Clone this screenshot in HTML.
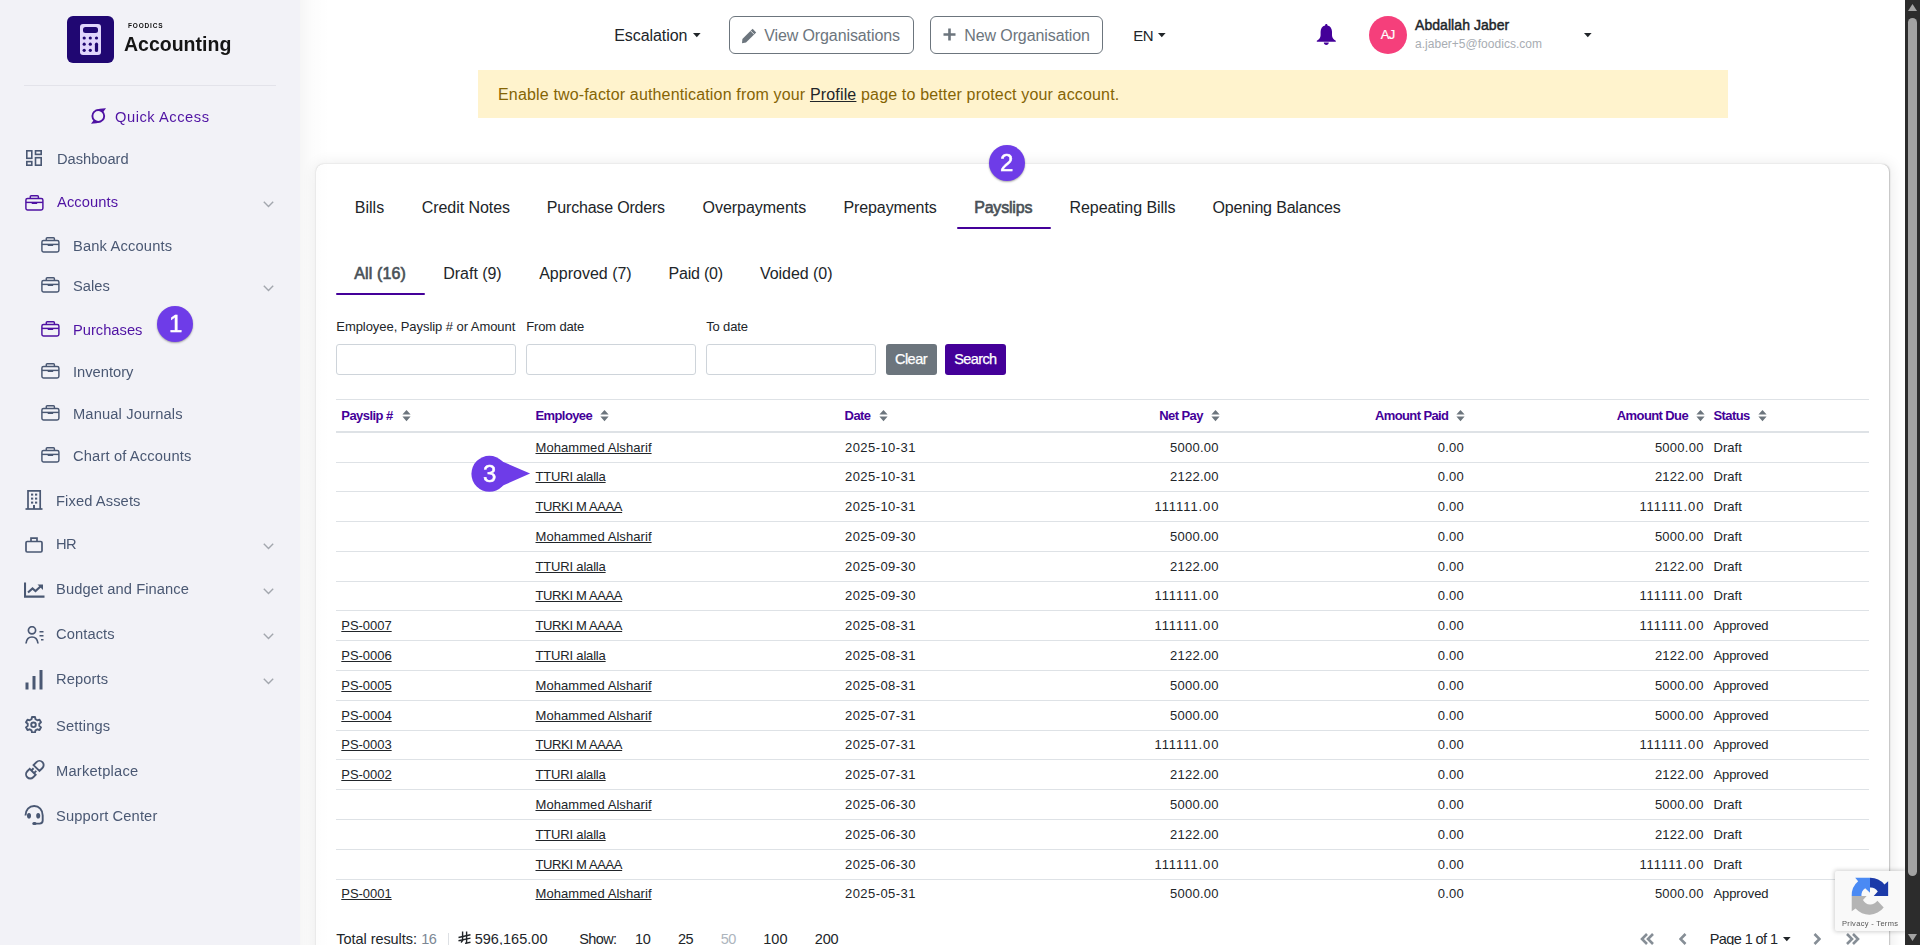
<!DOCTYPE html>
<html><head><meta charset="utf-8">
<style>
*{box-sizing:border-box;margin:0;padding:0}
html,body{width:1920px;height:945px;overflow:hidden;background:#fff;font-family:"Liberation Sans",sans-serif;color:#212529}
.t{position:absolute;white-space:nowrap;line-height:1}
.r{position:absolute}
.u{text-decoration:underline;text-underline-offset:1px}
.g{will-change:transform}
</style></head>
<body>

<div class="r" style="left:316px;top:164px;width:1573px;height:900px;border-radius:8px;background:#fff;box-shadow:0.3px 0.3px 1.5px rgba(0,0,0,0.22),1px 1px 14px 3px rgba(0,0,0,0.065)"></div>
<div class="r" style="left:0px;top:0px;width:300px;height:945px;background:#f2f2f7"></div>
<div class="r" style="left:67px;top:16px;width:47px;height:47px;border-radius:6px;background:#200772"></div>
<svg class="r" style="left:67px;top:16px" width="47" height="47" viewBox="0 0 47 47"><rect x="13" y="8" width="21" height="31" rx="3" fill="#e0d5fb"/>
<rect x="16" y="11" width="15" height="6" rx="2.5" fill="#200772"/>
<g fill="#200772"><circle cx="17.2" cy="22" r="1.6"/><circle cx="23.3" cy="22" r="1.6"/><circle cx="29.5" cy="22" r="1.6"/>
<circle cx="17.2" cy="28.2" r="1.6"/><circle cx="23.3" cy="28.2" r="1.6"/>
<circle cx="17.2" cy="34.3" r="1.6"/><circle cx="23.3" cy="34.3" r="1.6"/>
<rect x="27.9" y="26.6" width="3.2" height="9.4" rx="1.6"/></g></svg>
<div class="t  g" style="left:128px;top:23px;font-size:6.5px;color:#111;font-weight:bold;letter-spacing:0.815px;">FOODICS</div>
<div class="t  g" style="left:124px;top:35px;font-size:19.5px;color:#151515;font-weight:bold;letter-spacing:0.006px;">Accounting</div>
<div class="r" style="left:24px;top:85px;width:252px;height:1px;background:#e3e3ea"></div>
<div class="t  g" style="left:114.8px;top:110px;font-size:14.7px;color:#4f12a3;letter-spacing:0.534px;">Quick Access</div>
<svg class="r" style="left:85px;top:100px" width="30" height="30" viewBox="0 0 30 30"><circle cx="13.3" cy="16" r="5.9" fill="none" stroke="#4f12a3" stroke-width="1.9"/><path d="M10 9.9 Q15 8.2 21 8.3 L18.2 11.9 Z M16.6 22.1 Q11.5 23.8 6 23.8 L8.6 20.2 Z" fill="#4f12a3"/></svg>
<div class="t  g" style="left:56.6px;top:152px;font-size:14.7px;color:#4a5873;letter-spacing:-0.027px;">Dashboard</div>
<svg class="r" style="left:26px;top:150px" width="16" height="16" viewBox="0 0 16 16"><g fill="none" stroke="#4a5873" stroke-width="1.6"><rect x="0.8" y="0.8" width="5" height="7.5"/><rect x="9.5" y="0.8" width="5.7" height="3.6"/><rect x="0.8" y="11.6" width="5" height="3.6"/><rect x="9.5" y="7.7" width="5.7" height="7.5"/></g></svg>
<div class="t  g" style="left:56.6px;top:195px;font-size:14.7px;color:#4f12a3;letter-spacing:0.105px;">Accounts</div>
<svg class="r" style="left:24.7px;top:194.8px" width="19" height="17" viewBox="0 0 19 17"><g fill="none" stroke="#4f12a3" stroke-width="1.45"><rect x="0.9" y="3.4" width="17" height="11.6" rx="1.7"/><path d="M5.3 3.4 V1.7 Q5.3 0.75 6.2 0.75 H12.5 Q13.4 0.75 13.4 1.7 V3.4"/><path d="M0.9 7.4 H17.9"/></g><rect x="6.7" y="7.4" width="5.5" height="1.6" rx="0.5" fill="#4f12a3"/></svg>
<svg class="r" style="left:263px;top:201px" width="11" height="7" viewBox="0 0 11 7"><path d="M0.8 0.8 L5.5 5.5 L10.2 0.8" fill="none" stroke="#a3a7ae" stroke-width="1.4"/></svg>
<div class="t  g" style="left:72.5px;top:239px;font-size:14.7px;color:#4a5873;letter-spacing:0.163px;">Bank Accounts</div>
<svg class="r" style="left:40.6px;top:237px" width="19" height="17" viewBox="0 0 19 17"><g fill="none" stroke="#4a5873" stroke-width="1.45"><rect x="0.9" y="3.4" width="17" height="11.6" rx="1.7"/><path d="M5.3 3.4 V1.7 Q5.3 0.75 6.2 0.75 H12.5 Q13.4 0.75 13.4 1.7 V3.4"/><path d="M0.9 7.4 H17.9"/></g><rect x="6.7" y="7.4" width="5.5" height="1.6" rx="0.5" fill="#4a5873"/></svg>
<div class="t  g" style="left:72.5px;top:279px;font-size:14.7px;color:#4a5873;">Sales</div>
<svg class="r" style="left:40.6px;top:277.3px" width="19" height="17" viewBox="0 0 19 17"><g fill="none" stroke="#4a5873" stroke-width="1.45"><rect x="0.9" y="3.4" width="17" height="11.6" rx="1.7"/><path d="M5.3 3.4 V1.7 Q5.3 0.75 6.2 0.75 H12.5 Q13.4 0.75 13.4 1.7 V3.4"/><path d="M0.9 7.4 H17.9"/></g><rect x="6.7" y="7.4" width="5.5" height="1.6" rx="0.5" fill="#4a5873"/></svg>
<div class="t  g" style="left:72.5px;top:323px;font-size:14.7px;color:#4f12a3;">Purchases</div>
<svg class="r" style="left:40.6px;top:321px" width="19" height="17" viewBox="0 0 19 17"><g fill="none" stroke="#4f12a3" stroke-width="1.45"><rect x="0.9" y="3.4" width="17" height="11.6" rx="1.7"/><path d="M5.3 3.4 V1.7 Q5.3 0.75 6.2 0.75 H12.5 Q13.4 0.75 13.4 1.7 V3.4"/><path d="M0.9 7.4 H17.9"/></g><rect x="6.7" y="7.4" width="5.5" height="1.6" rx="0.5" fill="#4f12a3"/></svg>
<div class="t  g" style="left:72.5px;top:365px;font-size:14.7px;color:#4a5873;">Inventory</div>
<svg class="r" style="left:40.6px;top:363px" width="19" height="17" viewBox="0 0 19 17"><g fill="none" stroke="#4a5873" stroke-width="1.45"><rect x="0.9" y="3.4" width="17" height="11.6" rx="1.7"/><path d="M5.3 3.4 V1.7 Q5.3 0.75 6.2 0.75 H12.5 Q13.4 0.75 13.4 1.7 V3.4"/><path d="M0.9 7.4 H17.9"/></g><rect x="6.7" y="7.4" width="5.5" height="1.6" rx="0.5" fill="#4a5873"/></svg>
<div class="t  g" style="left:72.5px;top:407px;font-size:14.7px;color:#4a5873;letter-spacing:0.131px;">Manual Journals</div>
<svg class="r" style="left:40.6px;top:405px" width="19" height="17" viewBox="0 0 19 17"><g fill="none" stroke="#4a5873" stroke-width="1.45"><rect x="0.9" y="3.4" width="17" height="11.6" rx="1.7"/><path d="M5.3 3.4 V1.7 Q5.3 0.75 6.2 0.75 H12.5 Q13.4 0.75 13.4 1.7 V3.4"/><path d="M0.9 7.4 H17.9"/></g><rect x="6.7" y="7.4" width="5.5" height="1.6" rx="0.5" fill="#4a5873"/></svg>
<div class="t  g" style="left:72.5px;top:449px;font-size:14.7px;color:#4a5873;letter-spacing:0.148px;">Chart of Accounts</div>
<svg class="r" style="left:40.6px;top:447px" width="19" height="17" viewBox="0 0 19 17"><g fill="none" stroke="#4a5873" stroke-width="1.45"><rect x="0.9" y="3.4" width="17" height="11.6" rx="1.7"/><path d="M5.3 3.4 V1.7 Q5.3 0.75 6.2 0.75 H12.5 Q13.4 0.75 13.4 1.7 V3.4"/><path d="M0.9 7.4 H17.9"/></g><rect x="6.7" y="7.4" width="5.5" height="1.6" rx="0.5" fill="#4a5873"/></svg>
<svg class="r" style="left:263px;top:285px" width="11" height="7" viewBox="0 0 11 7"><path d="M0.8 0.8 L5.5 5.5 L10.2 0.8" fill="none" stroke="#a3a7ae" stroke-width="1.4"/></svg>
<div class="t  g" style="left:56.2px;top:494px;font-size:14.7px;color:#4a5873;letter-spacing:0.106px;">Fixed Assets</div>
<div class="t  g" style="left:56.2px;top:537px;font-size:14.7px;color:#4a5873;letter-spacing:-0.600px;">HR</div>
<div class="t  g" style="left:56.2px;top:582px;font-size:14.7px;color:#4a5873;letter-spacing:0.083px;">Budget and Finance</div>
<div class="t  g" style="left:56.2px;top:627px;font-size:14.7px;color:#4a5873;letter-spacing:0.098px;">Contacts</div>
<div class="t  g" style="left:56.2px;top:672px;font-size:14.7px;color:#4a5873;letter-spacing:0.121px;">Reports</div>
<div class="t  g" style="left:56.2px;top:719px;font-size:14.7px;color:#4a5873;letter-spacing:0.155px;">Settings</div>
<div class="t  g" style="left:56.2px;top:764px;font-size:14.7px;color:#4a5873;letter-spacing:0.213px;">Marketplace</div>
<div class="t  g" style="left:56.2px;top:809px;font-size:14.7px;color:#4a5873;letter-spacing:0.131px;">Support Center</div>
<svg class="r" style="left:263px;top:543px" width="11" height="7" viewBox="0 0 11 7"><path d="M0.8 0.8 L5.5 5.5 L10.2 0.8" fill="none" stroke="#a3a7ae" stroke-width="1.4"/></svg>
<svg class="r" style="left:263px;top:588px" width="11" height="7" viewBox="0 0 11 7"><path d="M0.8 0.8 L5.5 5.5 L10.2 0.8" fill="none" stroke="#a3a7ae" stroke-width="1.4"/></svg>
<svg class="r" style="left:263px;top:632.6px" width="11" height="7" viewBox="0 0 11 7"><path d="M0.8 0.8 L5.5 5.5 L10.2 0.8" fill="none" stroke="#a3a7ae" stroke-width="1.4"/></svg>
<svg class="r" style="left:263px;top:677.5px" width="11" height="7" viewBox="0 0 11 7"><path d="M0.8 0.8 L5.5 5.5 L10.2 0.8" fill="none" stroke="#a3a7ae" stroke-width="1.4"/></svg>
<svg class="r" style="left:25px;top:490px" width="18" height="20" viewBox="0 0 18 20"><g fill="none" stroke="#4a5873" stroke-width="1.7"><path d="M3 19 V0.9 H15.2 V19"/><path d="M0.5 19 H17.5"/></g><g fill="#4a5873"><rect x="6" y="3.6" width="2.2" height="2"/><rect x="10" y="3.6" width="2.2" height="2"/><rect x="6" y="7.6" width="2.2" height="2"/><rect x="10" y="7.6" width="2.2" height="2"/><rect x="6" y="11.6" width="2.2" height="2"/><rect x="10" y="11.6" width="2.2" height="2"/><rect x="8" y="15" width="2" height="4"/></g></svg>
<svg class="r" style="left:25px;top:537px" width="18" height="16" viewBox="0 0 18 16"><g fill="none" stroke="#4a5873" stroke-width="1.7"><rect x="1" y="4.5" width="16" height="10.5" rx="1.2"/><path d="M6 4.5 V1.2 H12 V4.5"/></g></svg>
<svg class="r" style="left:24px;top:582px" width="21" height="16" viewBox="0 0 21 16"><g fill="none" stroke="#4a5873" stroke-width="2.1"><path d="M1 0.5 V14.6 H20.5"/><path d="M4 10.5 L8.5 6.5 L11.5 9 L17 4"/></g><path d="M13.5 2.5 H19 V8 Z" fill="#4a5873"/></svg>
<svg class="r" style="left:25px;top:626px" width="19" height="18" viewBox="0 0 19 18"><g fill="none" stroke="#4a5873" stroke-width="1.7"><circle cx="7" cy="4.3" r="3.6"/><path d="M1 17.5 C1.5 13 4 11 7 11 C10 11 12.5 13 13 17.5"/></g><g fill="#4a5873"><rect x="14.5" y="5" width="4" height="1.5"/><rect x="14.5" y="9" width="4" height="1.5"/><rect x="16" y="13" width="2.5" height="1.5"/></g></svg>
<svg class="r" style="left:25px;top:670px" width="19" height="20" viewBox="0 0 19 20"><g fill="#4a5873"><rect x="0.5" y="12.5" width="3" height="7"/><rect x="7.5" y="6" width="3" height="13.5"/><rect x="14.5" y="0" width="3" height="19.5"/></g></svg>
<svg class="r" style="left:25px;top:716px" width="17" height="17" viewBox="0 0 17 17"><g fill="none" stroke="#4a5873" stroke-width="1.9"><path d="M7 1 H10 L10.5 3.2 L12.4 4.3 L14.5 3.6 L16 6.2 L14.3 7.7 V9.9 L16 11.4 L14.5 14 L12.4 13.3 L10.5 14.4 L10 16.5 H7 L6.5 14.4 L4.6 13.3 L2.5 14 L1 11.4 L2.7 9.9 V7.7 L1 6.2 L2.5 3.6 L4.6 4.3 L6.5 3.2 Z" stroke-linejoin="round"/><circle cx="8.5" cy="8.8" r="2.3"/></g></svg>
<svg class="r" style="left:21px;top:757px" width="27" height="26" viewBox="0 0 27 26"><g transform="rotate(45 13.5 13)" fill="none" stroke="#4a5873" stroke-width="1.9"><path d="M9.3 10.2 V6 A4.2 4.2 0 0 1 17.7 6 V10.2 Z"/><path d="M9.3 15.6 V19 A4.2 4.2 0 0 0 17.7 19 V15.6 Z"/><path d="M11.6 15.6 V12.4 M15.4 15.6 V12.4"/></g></svg>
<svg class="r" style="left:24px;top:805px" width="20" height="20" viewBox="0 0 20 20"><g fill="none" stroke="#4a5873" stroke-width="1.9"><path d="M1.5 10.5 C1.5 4.8 5.2 1 10.2 1 C15 1 18.7 4.8 18.7 10.5 V15.5 Q18.7 18.6 15.5 18.6 H11"/></g><g fill="#4a5873"><ellipse cx="5" cy="10.8" rx="2" ry="2.8"/><ellipse cx="14.2" cy="10.8" rx="2" ry="2.8"/><rect x="8.3" y="17" width="4.2" height="3" rx="1.5"/></g></svg>
<div class="r" style="left:300px;top:0px;width:30px;height:945px;background:linear-gradient(to right,rgba(0,0,0,0.035),rgba(0,0,0,0.012) 40%,rgba(0,0,0,0))"></div>
<div class="r" style="left:157.3px;top:305.7px;width:36px;height:36px;border-radius:50%;background:#6e3ce8;box-shadow:0 1px 2px rgba(0,0,0,0.35)"></div>
<div class="t  g" style="left:168.8px;top:312px;font-size:24px;color:#fff;-webkit-text-stroke:0.5px #fff;">1</div>
<div class="t " style="left:614.2px;top:28px;font-size:16px;color:#212529;letter-spacing:-0.058px;">Escalation</div>
<svg class="r" style="left:692.5px;top:33px" width="8" height="5" viewBox="0 0 8 5"><path d="M0 0 H7.6 L3.8 4.2 Z" fill="#212529"/></svg>
<div class="r" style="left:729px;top:16px;width:185px;height:38px;border:1px solid #6c757d;border-radius:6px"></div>
<svg class="r" style="left:740.5px;top:27.8px" width="16" height="16" viewBox="0 0 16 16"><path d="M11.6 0.8 L15.2 4.4 L5 14.6 L1 15.2 L1.4 11 Z" fill="#6c757d"/><path d="M9.6 2.8 L13.2 6.4" stroke="#fff" stroke-width="0.8"/></svg>
<div class="t " style="left:764.2px;top:28px;font-size:16px;color:#6c757d;letter-spacing:-0.103px;">View Organisations</div>
<div class="r" style="left:930px;top:16px;width:173px;height:38px;border:1px solid #6c757d;border-radius:6px"></div>
<svg class="r" style="left:942.8px;top:28.3px" width="13" height="13" viewBox="0 0 13 13"><path d="M6.5 0.5 V12.5 M0.5 6.5 H12.5" stroke="#6c757d" stroke-width="2.6"/></svg>
<div class="t " style="left:964.2px;top:28px;font-size:16px;color:#6c757d;letter-spacing:-0.092px;">New Organisation</div>
<div class="t " style="left:1133.3px;top:28px;font-size:15px;color:#212529;letter-spacing:-0.600px;">EN</div>
<svg class="r" style="left:1157.5px;top:33px" width="8" height="5" viewBox="0 0 8 5"><path d="M0 0 H7.6 L3.8 4.2 Z" fill="#212529"/></svg>
<svg class="r" style="left:1316px;top:23px" width="21" height="23" viewBox="0 0 21 23"><path d="M10.3 1 C11.1 1 11.5 1.6 11.5 2.4 C14.6 3.1 16 5.6 16 8.8 V12.2 C16 14.6 17.6 16.6 19.8 17.8 V18.8 H0.8 V17.8 C3 16.6 4.6 14.6 4.6 12.2 V8.8 C4.6 5.6 6 3.1 9.1 2.4 C9.1 1.6 9.5 1 10.3 1 Z M7.8 19.6 H12.8 C12.8 21 11.7 21.9 10.3 21.9 C8.9 21.9 7.8 21 7.8 19.6 Z" fill="#440099"/></svg>
<div class="r" style="left:1369px;top:15.7px;width:38px;height:38px;border-radius:50%;background:#f53f7b"></div>
<div class="t " style="left:1380.8px;top:28px;font-size:13px;color:#fff;letter-spacing:-0.600px;-webkit-text-stroke:0.2px #fff;">AJ</div>
<div class="t " style="left:1415px;top:18px;font-size:14px;color:#212529;letter-spacing:0.061px;-webkit-text-stroke:0.45px #212529;">Abdallah Jaber</div>
<div class="t " style="left:1415px;top:38px;font-size:12px;color:#a8adb3;letter-spacing:0.021px;">a.jaber+5@foodics.com</div>
<svg class="r" style="left:1584px;top:33px" width="8" height="5" viewBox="0 0 8 5"><path d="M0 0 H7.6 L3.8 4.2 Z" fill="#212529"/></svg>
<div class="r" style="left:478px;top:70px;width:1250px;height:48px;background:#fff3cd"></div>
<div class="t" style="left:498px;top:87px;font-size:16px;color:#856404;letter-spacing:0.16px">Enable two-factor authentication from your <span class="u" style="color:#212529">Profile</span> page to better protect your account.</div>
<div class="t " style="left:354.7px;top:200px;font-size:16px;color:#212529;letter-spacing:0.041px;">Bills</div>
<div class="t " style="left:421.7px;top:200px;font-size:16px;color:#212529;letter-spacing:-0.057px;">Credit Notes</div>
<div class="t " style="left:546.8px;top:200px;font-size:16px;color:#212529;letter-spacing:-0.189px;">Purchase Orders</div>
<div class="t " style="left:702.5px;top:200px;font-size:16px;color:#212529;letter-spacing:-0.022px;">Overpayments</div>
<div class="t " style="left:843.4px;top:200px;font-size:16px;color:#212529;letter-spacing:-0.087px;">Prepayments</div>
<div class="t " style="left:974.2px;top:200px;font-size:16px;color:#495057;letter-spacing:-0.197px;-webkit-text-stroke:0.55px #495057;text-shadow:0 0 1px rgba(0,0,0,0.2);">Payslips</div>
<div class="t " style="left:1069.4px;top:200px;font-size:16px;color:#212529;letter-spacing:-0.038px;">Repeating Bills</div>
<div class="t " style="left:1212.5px;top:200px;font-size:16px;color:#212529;letter-spacing:-0.164px;">Opening Balances</div>
<div class="r" style="left:956.6px;top:227px;width:94px;height:2px;background:#440099;border-radius:2px"></div>
<div class="t " style="left:354.2px;top:266px;font-size:16px;color:#495057;letter-spacing:0.131px;-webkit-text-stroke:0.55px #495057;text-shadow:0 0 1px rgba(0,0,0,0.2);">All (16)</div>
<div class="t " style="left:443.3px;top:266px;font-size:16px;color:#212529;letter-spacing:-0.034px;">Draft (9)</div>
<div class="t " style="left:539.2px;top:266px;font-size:16px;color:#212529;letter-spacing:0.001px;">Approved (7)</div>
<div class="t " style="left:668.5px;top:266px;font-size:16px;color:#212529;letter-spacing:-0.218px;">Paid (0)</div>
<div class="t " style="left:760px;top:266px;font-size:16px;color:#212529;letter-spacing:-0.049px;">Voided (0)</div>
<div class="r" style="left:336.3px;top:293px;width:88.4px;height:2px;background:#440099;border-radius:2px"></div>
<div class="t " style="left:336.3px;top:320px;font-size:13px;color:#212529;letter-spacing:-0.059px;">Employee, Payslip # or Amount</div>
<div class="t " style="left:526.3px;top:320px;font-size:13px;color:#212529;letter-spacing:-0.168px;">From date</div>
<div class="t " style="left:706.2px;top:320px;font-size:13px;color:#212529;letter-spacing:-0.141px;">To date</div>
<div class="r" style="left:336px;top:344px;width:180px;height:31px;border:1px solid #ced4da;border-radius:3px;background:#fff"></div>
<div class="r" style="left:526px;top:344px;width:170px;height:31px;border:1px solid #ced4da;border-radius:3px;background:#fff"></div>
<div class="r" style="left:706px;top:344px;width:170px;height:31px;border:1px solid #ced4da;border-radius:3px;background:#fff"></div>
<div class="r" style="left:886px;top:344px;width:51px;height:31px;background:#6c757d;border-radius:3px"></div>
<div class="t " style="left:895px;top:352px;font-size:14.5px;color:#fff;letter-spacing:-0.538px;-webkit-text-stroke:0.25px #fff;">Clear</div>
<div class="r" style="left:945px;top:344px;width:61px;height:31px;background:#440099;border-radius:3px"></div>
<div class="t " style="left:954.2px;top:352px;font-size:14.5px;color:#fff;letter-spacing:-0.600px;-webkit-text-stroke:0.25px #fff;">Search</div>
<div class="r" style="left:336px;top:399px;width:1533px;height:1px;background:#dee2e6"></div>
<div class="r" style="left:336px;top:431px;width:1533px;height:2px;background:#dee2e6"></div>
<div class="t " style="left:341.3px;top:409px;font-size:13px;color:#440099;font-weight:bold;letter-spacing:-0.546px;">Payslip #</div>
<svg class="r" style="left:401.5px;top:409.7px" width="9" height="12" viewBox="0 0 9 12"><path d="M4.5 0 L8.6 4.6 H0.4 Z M4.5 11.2 L8.6 6.6 H0.4 Z" fill="#6c757d"/></svg>
<div class="t " style="left:535.5px;top:409px;font-size:13px;color:#440099;font-weight:bold;letter-spacing:-0.600px;">Employee</div>
<svg class="r" style="left:600px;top:409.7px" width="9" height="12" viewBox="0 0 9 12"><path d="M4.5 0 L8.6 4.6 H0.4 Z M4.5 11.2 L8.6 6.6 H0.4 Z" fill="#6c757d"/></svg>
<div class="t " style="left:844.6px;top:409px;font-size:13px;color:#440099;font-weight:bold;letter-spacing:-0.600px;">Date</div>
<svg class="r" style="left:879.2px;top:409.7px" width="9" height="12" viewBox="0 0 9 12"><path d="M4.5 0 L8.6 4.6 H0.4 Z M4.5 11.2 L8.6 6.6 H0.4 Z" fill="#6c757d"/></svg>
<div class="t " style="left:1159.3px;top:409px;font-size:13px;color:#440099;font-weight:bold;letter-spacing:-0.600px;">Net Pay</div>
<svg class="r" style="left:1210.7px;top:409.7px" width="9" height="12" viewBox="0 0 9 12"><path d="M4.5 0 L8.6 4.6 H0.4 Z M4.5 11.2 L8.6 6.6 H0.4 Z" fill="#6c757d"/></svg>
<div class="t " style="left:1374.9px;top:409px;font-size:13px;color:#440099;font-weight:bold;letter-spacing:-0.600px;">Amount Paid</div>
<svg class="r" style="left:1456px;top:409.7px" width="9" height="12" viewBox="0 0 9 12"><path d="M4.5 0 L8.6 4.6 H0.4 Z M4.5 11.2 L8.6 6.6 H0.4 Z" fill="#6c757d"/></svg>
<div class="t " style="left:1616.8px;top:409px;font-size:13px;color:#440099;font-weight:bold;letter-spacing:-0.600px;">Amount Due</div>
<svg class="r" style="left:1695.5px;top:409.7px" width="9" height="12" viewBox="0 0 9 12"><path d="M4.5 0 L8.6 4.6 H0.4 Z M4.5 11.2 L8.6 6.6 H0.4 Z" fill="#6c757d"/></svg>
<div class="t " style="left:1713.5px;top:409px;font-size:13px;color:#440099;font-weight:bold;letter-spacing:-0.600px;">Status</div>
<svg class="r" style="left:1758px;top:409.7px" width="9" height="12" viewBox="0 0 9 12"><path d="M4.5 0 L8.6 4.6 H0.4 Z M4.5 11.2 L8.6 6.6 H0.4 Z" fill="#6c757d"/></svg>
<div class="r" style="left:336px;top:462px;width:1533px;height:1px;background:#dee2e6"></div>
<div class="t u" style="left:535.5px;top:441px;font-size:13px;color:#212529;letter-spacing:0.070px;">Mohammed Alsharif</div>
<div class="t " style="left:845px;top:441px;font-size:13px;color:#212529;letter-spacing:0.433px;">2025-10-31</div>
<div class="t " style="left:1170.0px;top:441px;font-size:13px;color:#212529;letter-spacing:0.251px;">5000.00</div>
<div class="t " style="left:1437.7px;top:441px;font-size:13px;color:#212529;letter-spacing:0.232px;">0.00</div>
<div class="t " style="left:1654.9px;top:441px;font-size:13px;color:#212529;letter-spacing:0.251px;">5000.00</div>
<div class="t " style="left:1713.5px;top:441px;font-size:13px;color:#212529;letter-spacing:0.057px;">Draft</div>
<div class="r" style="left:336px;top:491px;width:1533px;height:1px;background:#dee2e6"></div>
<div class="t u" style="left:535.5px;top:470px;font-size:13px;color:#212529;letter-spacing:-0.176px;">TTURI alalla</div>
<div class="t " style="left:845px;top:470px;font-size:13px;color:#212529;letter-spacing:0.433px;">2025-10-31</div>
<div class="t " style="left:1170.0px;top:470px;font-size:13px;color:#212529;letter-spacing:0.251px;">2122.00</div>
<div class="t " style="left:1437.7px;top:470px;font-size:13px;color:#212529;letter-spacing:0.232px;">0.00</div>
<div class="t " style="left:1654.9px;top:470px;font-size:13px;color:#212529;letter-spacing:0.251px;">2122.00</div>
<div class="t " style="left:1713.5px;top:470px;font-size:13px;color:#212529;letter-spacing:0.057px;">Draft</div>
<div class="r" style="left:336px;top:521px;width:1533px;height:1px;background:#dee2e6"></div>
<div class="t u" style="left:535.5px;top:500px;font-size:13px;color:#212529;letter-spacing:-0.366px;">TURKI M AAAA</div>
<div class="t " style="left:845px;top:500px;font-size:13px;color:#212529;letter-spacing:0.433px;">2025-10-31</div>
<div class="t " style="left:1154.5px;top:500px;font-size:13px;color:#212529;letter-spacing:0.921px;">111111.00</div>
<div class="t " style="left:1437.7px;top:500px;font-size:13px;color:#212529;letter-spacing:0.232px;">0.00</div>
<div class="t " style="left:1639.4px;top:500px;font-size:13px;color:#212529;letter-spacing:0.921px;">111111.00</div>
<div class="t " style="left:1713.5px;top:500px;font-size:13px;color:#212529;letter-spacing:0.057px;">Draft</div>
<div class="r" style="left:336px;top:551px;width:1533px;height:1px;background:#dee2e6"></div>
<div class="t u" style="left:535.5px;top:530px;font-size:13px;color:#212529;letter-spacing:0.070px;">Mohammed Alsharif</div>
<div class="t " style="left:845px;top:530px;font-size:13px;color:#212529;letter-spacing:0.433px;">2025-09-30</div>
<div class="t " style="left:1170.0px;top:530px;font-size:13px;color:#212529;letter-spacing:0.251px;">5000.00</div>
<div class="t " style="left:1437.7px;top:530px;font-size:13px;color:#212529;letter-spacing:0.232px;">0.00</div>
<div class="t " style="left:1654.9px;top:530px;font-size:13px;color:#212529;letter-spacing:0.251px;">5000.00</div>
<div class="t " style="left:1713.5px;top:530px;font-size:13px;color:#212529;letter-spacing:0.057px;">Draft</div>
<div class="r" style="left:336px;top:581px;width:1533px;height:1px;background:#dee2e6"></div>
<div class="t u" style="left:535.5px;top:560px;font-size:13px;color:#212529;letter-spacing:-0.176px;">TTURI alalla</div>
<div class="t " style="left:845px;top:560px;font-size:13px;color:#212529;letter-spacing:0.433px;">2025-09-30</div>
<div class="t " style="left:1170.0px;top:560px;font-size:13px;color:#212529;letter-spacing:0.251px;">2122.00</div>
<div class="t " style="left:1437.7px;top:560px;font-size:13px;color:#212529;letter-spacing:0.232px;">0.00</div>
<div class="t " style="left:1654.9px;top:560px;font-size:13px;color:#212529;letter-spacing:0.251px;">2122.00</div>
<div class="t " style="left:1713.5px;top:560px;font-size:13px;color:#212529;letter-spacing:0.057px;">Draft</div>
<div class="r" style="left:336px;top:610px;width:1533px;height:1px;background:#dee2e6"></div>
<div class="t u" style="left:535.5px;top:589px;font-size:13px;color:#212529;letter-spacing:-0.366px;">TURKI M AAAA</div>
<div class="t " style="left:845px;top:589px;font-size:13px;color:#212529;letter-spacing:0.433px;">2025-09-30</div>
<div class="t " style="left:1154.5px;top:589px;font-size:13px;color:#212529;letter-spacing:0.921px;">111111.00</div>
<div class="t " style="left:1437.7px;top:589px;font-size:13px;color:#212529;letter-spacing:0.232px;">0.00</div>
<div class="t " style="left:1639.4px;top:589px;font-size:13px;color:#212529;letter-spacing:0.921px;">111111.00</div>
<div class="t " style="left:1713.5px;top:589px;font-size:13px;color:#212529;letter-spacing:0.057px;">Draft</div>
<div class="r" style="left:336px;top:640px;width:1533px;height:1px;background:#dee2e6"></div>
<div class="t u" style="left:341.3px;top:619px;font-size:13px;color:#212529;letter-spacing:-0.032px;">PS-0007</div>
<div class="t u" style="left:535.5px;top:619px;font-size:13px;color:#212529;letter-spacing:-0.366px;">TURKI M AAAA</div>
<div class="t " style="left:845px;top:619px;font-size:13px;color:#212529;letter-spacing:0.433px;">2025-08-31</div>
<div class="t " style="left:1154.5px;top:619px;font-size:13px;color:#212529;letter-spacing:0.921px;">111111.00</div>
<div class="t " style="left:1437.7px;top:619px;font-size:13px;color:#212529;letter-spacing:0.232px;">0.00</div>
<div class="t " style="left:1639.4px;top:619px;font-size:13px;color:#212529;letter-spacing:0.921px;">111111.00</div>
<div class="t " style="left:1713.5px;top:619px;font-size:13px;color:#212529;letter-spacing:-0.093px;">Approved</div>
<div class="r" style="left:336px;top:670px;width:1533px;height:1px;background:#dee2e6"></div>
<div class="t u" style="left:341.3px;top:649px;font-size:13px;color:#212529;letter-spacing:-0.032px;">PS-0006</div>
<div class="t u" style="left:535.5px;top:649px;font-size:13px;color:#212529;letter-spacing:-0.176px;">TTURI alalla</div>
<div class="t " style="left:845px;top:649px;font-size:13px;color:#212529;letter-spacing:0.433px;">2025-08-31</div>
<div class="t " style="left:1170.0px;top:649px;font-size:13px;color:#212529;letter-spacing:0.251px;">2122.00</div>
<div class="t " style="left:1437.7px;top:649px;font-size:13px;color:#212529;letter-spacing:0.232px;">0.00</div>
<div class="t " style="left:1654.9px;top:649px;font-size:13px;color:#212529;letter-spacing:0.251px;">2122.00</div>
<div class="t " style="left:1713.5px;top:649px;font-size:13px;color:#212529;letter-spacing:-0.093px;">Approved</div>
<div class="r" style="left:336px;top:700px;width:1533px;height:1px;background:#dee2e6"></div>
<div class="t u" style="left:341.3px;top:679px;font-size:13px;color:#212529;letter-spacing:-0.032px;">PS-0005</div>
<div class="t u" style="left:535.5px;top:679px;font-size:13px;color:#212529;letter-spacing:0.070px;">Mohammed Alsharif</div>
<div class="t " style="left:845px;top:679px;font-size:13px;color:#212529;letter-spacing:0.433px;">2025-08-31</div>
<div class="t " style="left:1170.0px;top:679px;font-size:13px;color:#212529;letter-spacing:0.251px;">5000.00</div>
<div class="t " style="left:1437.7px;top:679px;font-size:13px;color:#212529;letter-spacing:0.232px;">0.00</div>
<div class="t " style="left:1654.9px;top:679px;font-size:13px;color:#212529;letter-spacing:0.251px;">5000.00</div>
<div class="t " style="left:1713.5px;top:679px;font-size:13px;color:#212529;letter-spacing:-0.093px;">Approved</div>
<div class="r" style="left:336px;top:730px;width:1533px;height:1px;background:#dee2e6"></div>
<div class="t u" style="left:341.3px;top:709px;font-size:13px;color:#212529;letter-spacing:-0.032px;">PS-0004</div>
<div class="t u" style="left:535.5px;top:709px;font-size:13px;color:#212529;letter-spacing:0.070px;">Mohammed Alsharif</div>
<div class="t " style="left:845px;top:709px;font-size:13px;color:#212529;letter-spacing:0.433px;">2025-07-31</div>
<div class="t " style="left:1170.0px;top:709px;font-size:13px;color:#212529;letter-spacing:0.251px;">5000.00</div>
<div class="t " style="left:1437.7px;top:709px;font-size:13px;color:#212529;letter-spacing:0.232px;">0.00</div>
<div class="t " style="left:1654.9px;top:709px;font-size:13px;color:#212529;letter-spacing:0.251px;">5000.00</div>
<div class="t " style="left:1713.5px;top:709px;font-size:13px;color:#212529;letter-spacing:-0.093px;">Approved</div>
<div class="r" style="left:336px;top:759px;width:1533px;height:1px;background:#dee2e6"></div>
<div class="t u" style="left:341.3px;top:738px;font-size:13px;color:#212529;letter-spacing:-0.032px;">PS-0003</div>
<div class="t u" style="left:535.5px;top:738px;font-size:13px;color:#212529;letter-spacing:-0.366px;">TURKI M AAAA</div>
<div class="t " style="left:845px;top:738px;font-size:13px;color:#212529;letter-spacing:0.433px;">2025-07-31</div>
<div class="t " style="left:1154.5px;top:738px;font-size:13px;color:#212529;letter-spacing:0.921px;">111111.00</div>
<div class="t " style="left:1437.7px;top:738px;font-size:13px;color:#212529;letter-spacing:0.232px;">0.00</div>
<div class="t " style="left:1639.4px;top:738px;font-size:13px;color:#212529;letter-spacing:0.921px;">111111.00</div>
<div class="t " style="left:1713.5px;top:738px;font-size:13px;color:#212529;letter-spacing:-0.093px;">Approved</div>
<div class="r" style="left:336px;top:789px;width:1533px;height:1px;background:#dee2e6"></div>
<div class="t u" style="left:341.3px;top:768px;font-size:13px;color:#212529;letter-spacing:-0.032px;">PS-0002</div>
<div class="t u" style="left:535.5px;top:768px;font-size:13px;color:#212529;letter-spacing:-0.176px;">TTURI alalla</div>
<div class="t " style="left:845px;top:768px;font-size:13px;color:#212529;letter-spacing:0.433px;">2025-07-31</div>
<div class="t " style="left:1170.0px;top:768px;font-size:13px;color:#212529;letter-spacing:0.251px;">2122.00</div>
<div class="t " style="left:1437.7px;top:768px;font-size:13px;color:#212529;letter-spacing:0.232px;">0.00</div>
<div class="t " style="left:1654.9px;top:768px;font-size:13px;color:#212529;letter-spacing:0.251px;">2122.00</div>
<div class="t " style="left:1713.5px;top:768px;font-size:13px;color:#212529;letter-spacing:-0.093px;">Approved</div>
<div class="r" style="left:336px;top:819px;width:1533px;height:1px;background:#dee2e6"></div>
<div class="t u" style="left:535.5px;top:798px;font-size:13px;color:#212529;letter-spacing:0.070px;">Mohammed Alsharif</div>
<div class="t " style="left:845px;top:798px;font-size:13px;color:#212529;letter-spacing:0.433px;">2025-06-30</div>
<div class="t " style="left:1170.0px;top:798px;font-size:13px;color:#212529;letter-spacing:0.251px;">5000.00</div>
<div class="t " style="left:1437.7px;top:798px;font-size:13px;color:#212529;letter-spacing:0.232px;">0.00</div>
<div class="t " style="left:1654.9px;top:798px;font-size:13px;color:#212529;letter-spacing:0.251px;">5000.00</div>
<div class="t " style="left:1713.5px;top:798px;font-size:13px;color:#212529;letter-spacing:0.057px;">Draft</div>
<div class="r" style="left:336px;top:849px;width:1533px;height:1px;background:#dee2e6"></div>
<div class="t u" style="left:535.5px;top:828px;font-size:13px;color:#212529;letter-spacing:-0.176px;">TTURI alalla</div>
<div class="t " style="left:845px;top:828px;font-size:13px;color:#212529;letter-spacing:0.433px;">2025-06-30</div>
<div class="t " style="left:1170.0px;top:828px;font-size:13px;color:#212529;letter-spacing:0.251px;">2122.00</div>
<div class="t " style="left:1437.7px;top:828px;font-size:13px;color:#212529;letter-spacing:0.232px;">0.00</div>
<div class="t " style="left:1654.9px;top:828px;font-size:13px;color:#212529;letter-spacing:0.251px;">2122.00</div>
<div class="t " style="left:1713.5px;top:828px;font-size:13px;color:#212529;letter-spacing:0.057px;">Draft</div>
<div class="r" style="left:336px;top:879px;width:1533px;height:1px;background:#dee2e6"></div>
<div class="t u" style="left:535.5px;top:858px;font-size:13px;color:#212529;letter-spacing:-0.366px;">TURKI M AAAA</div>
<div class="t " style="left:845px;top:858px;font-size:13px;color:#212529;letter-spacing:0.433px;">2025-06-30</div>
<div class="t " style="left:1154.5px;top:858px;font-size:13px;color:#212529;letter-spacing:0.921px;">111111.00</div>
<div class="t " style="left:1437.7px;top:858px;font-size:13px;color:#212529;letter-spacing:0.232px;">0.00</div>
<div class="t " style="left:1639.4px;top:858px;font-size:13px;color:#212529;letter-spacing:0.921px;">111111.00</div>
<div class="t " style="left:1713.5px;top:858px;font-size:13px;color:#212529;letter-spacing:0.057px;">Draft</div>
<div class="t u" style="left:341.3px;top:887px;font-size:13px;color:#212529;letter-spacing:-0.032px;">PS-0001</div>
<div class="t u" style="left:535.5px;top:887px;font-size:13px;color:#212529;letter-spacing:0.070px;">Mohammed Alsharif</div>
<div class="t " style="left:845px;top:887px;font-size:13px;color:#212529;letter-spacing:0.433px;">2025-05-31</div>
<div class="t " style="left:1170.0px;top:887px;font-size:13px;color:#212529;letter-spacing:0.251px;">5000.00</div>
<div class="t " style="left:1437.7px;top:887px;font-size:13px;color:#212529;letter-spacing:0.232px;">0.00</div>
<div class="t " style="left:1654.9px;top:887px;font-size:13px;color:#212529;letter-spacing:0.251px;">5000.00</div>
<div class="t " style="left:1713.5px;top:887px;font-size:13px;color:#212529;letter-spacing:-0.093px;">Approved</div>
<div class="t " style="left:336.3px;top:932px;font-size:14.5px;color:#212529;letter-spacing:-0.054px;">Total results:</div>
<div class="t " style="left:421.3px;top:932px;font-size:14.5px;color:#7c8794;letter-spacing:-0.600px;">16</div>
<div class="r" style="left:448px;top:933px;width:1px;height:12px;background:#dde0e4"></div>
<div class="t " style="left:474.7px;top:932px;font-size:14.5px;color:#212529;letter-spacing:0.025px;">596,165.00</div>
<svg class="r" style="left:458px;top:931px" width="13" height="14" viewBox="0 0 13 14"><g fill="none" stroke="#212529" stroke-width="1.4"><path d="M4.6 0.5 V9.5 L3 11.5"/><path d="M8.6 0.5 V12.5"/><path d="M0.5 6.5 L12.5 3.8 M0.5 9.8 L12.5 7.1 M7 12.4 L12.5 11.2"/></g></svg>
<div class="t " style="left:579.2px;top:932px;font-size:14.5px;color:#212529;letter-spacing:-0.600px;">Show:</div>
<div class="t " style="left:635px;top:932px;font-size:14.5px;color:#212529;letter-spacing:-0.329px;">10</div>
<div class="t " style="left:678px;top:932px;font-size:14.5px;color:#212529;letter-spacing:-0.600px;">25</div>
<div class="t " style="left:720.8px;top:932px;font-size:14.5px;color:#adb5bd;letter-spacing:-0.600px;">50</div>
<div class="t " style="left:763.3px;top:932px;font-size:14.5px;color:#212529;letter-spacing:0.003px;">100</div>
<div class="t " style="left:814.7px;top:932px;font-size:14.5px;color:#212529;letter-spacing:-0.097px;">200</div>
<svg class="r" style="left:1640px;top:933px" width="15" height="12" viewBox="0 0 15 12"><path d="M7 1 L2 6 L7 11 M13 1 L8 6 L13 11" fill="none" stroke="#868e96" stroke-width="2.6"/></svg>
<svg class="r" style="left:1679px;top:933px" width="8" height="12" viewBox="0 0 8 12"><path d="M6.5 1 L1.5 6 L6.5 11" fill="none" stroke="#868e96" stroke-width="2.6"/></svg>
<div class="t " style="left:1709.8px;top:932px;font-size:14.5px;color:#212529;letter-spacing:-0.600px;">Page 1 of 1</div>
<svg class="r" style="left:1782.5px;top:937px" width="8" height="5" viewBox="0 0 8 5"><path d="M0 0 H7.6 L3.8 4.2 Z" fill="#212529"/></svg>
<svg class="r" style="left:1812.5px;top:933px" width="8" height="12" viewBox="0 0 8 12"><path d="M1.5 1 L6.5 6 L1.5 11" fill="none" stroke="#868e96" stroke-width="2.6"/></svg>
<svg class="r" style="left:1845px;top:933px" width="15" height="12" viewBox="0 0 15 12"><path d="M2 1 L7 6 L2 11 M8 1 L13 6 L8 11" fill="none" stroke="#868e96" stroke-width="2.6"/></svg>
<div class="r" style="left:988.5px;top:144.6px;width:36px;height:36px;border-radius:50%;background:#6e3ce8;box-shadow:0 1px 2px rgba(0,0,0,0.35)"></div>
<div class="t  g" style="left:1000.0px;top:151px;font-size:24px;color:#fff;-webkit-text-stroke:0.5px #fff;">2</div>
<svg class="r" style="left:460px;top:445px" width="80" height="55" viewBox="0 0 80 55"><g fill="#6e3ce8"><circle cx="29.4" cy="28.8" r="18"/><path d="M36 14.2 Q40 16.2 43.5 17 L70.1 28.5 L43.5 40.3 Q40 41.2 36 43.4 Z"/></g></svg>
<div class="t  g" style="left:482.5px;top:462px;font-size:24px;color:#fff;-webkit-text-stroke:0.5px #fff;">3</div>
<div class="r" style="left:1835px;top:871px;width:70px;height:60px;background:#f9f9f9;border-radius:2px 0 0 2px;box-shadow:0 0 4px 1px rgba(0,0,0,0.18)"></div>
<svg class="r" style="left:1840px;top:866px" width="70" height="70" viewBox="0 0 945 945"><path d="M405 160 L205 160 L245 205 A247 247 0 0 0 158 405 L290 405 A115 115 0 0 1 340 300 L405 360 Z" fill="#4a8af4"/><path d="M405 158 A247 247 0 0 1 600 250 L650 205 L650 405 L455 405 L510 345 A115 115 0 0 0 405 290 Z" fill="#1c3aa9"/><path d="M158 405 L360 405 L310 460 A115 115 0 0 0 505 470 L590 560 A247 247 0 0 1 210 575 L158 610 Z" fill="#b4b4b4"/></svg>
<div class="t  g" style="left:1842px;top:920px;font-size:7.5px;color:#555;letter-spacing:0.319px;">Privacy - Terms</div>
<div class="r" style="left:1905px;top:0px;width:15px;height:945px;background:#2c2c2c"></div>
<div class="r" style="left:1908px;top:18px;width:9px;height:858px;background:#a3a3a3;border-radius:4.5px"></div>
<svg class="r" style="left:1908px;top:4px" width="9" height="7" viewBox="0 0 9 7"><path d="M4.5 0 L9 7 H0 Z" fill="#a3a3a3"/></svg>
<svg class="r" style="left:1908px;top:934px" width="9" height="7" viewBox="0 0 9 7"><path d="M0 0 H9 L4.5 7 Z" fill="#a3a3a3"/></svg>
</body></html>
